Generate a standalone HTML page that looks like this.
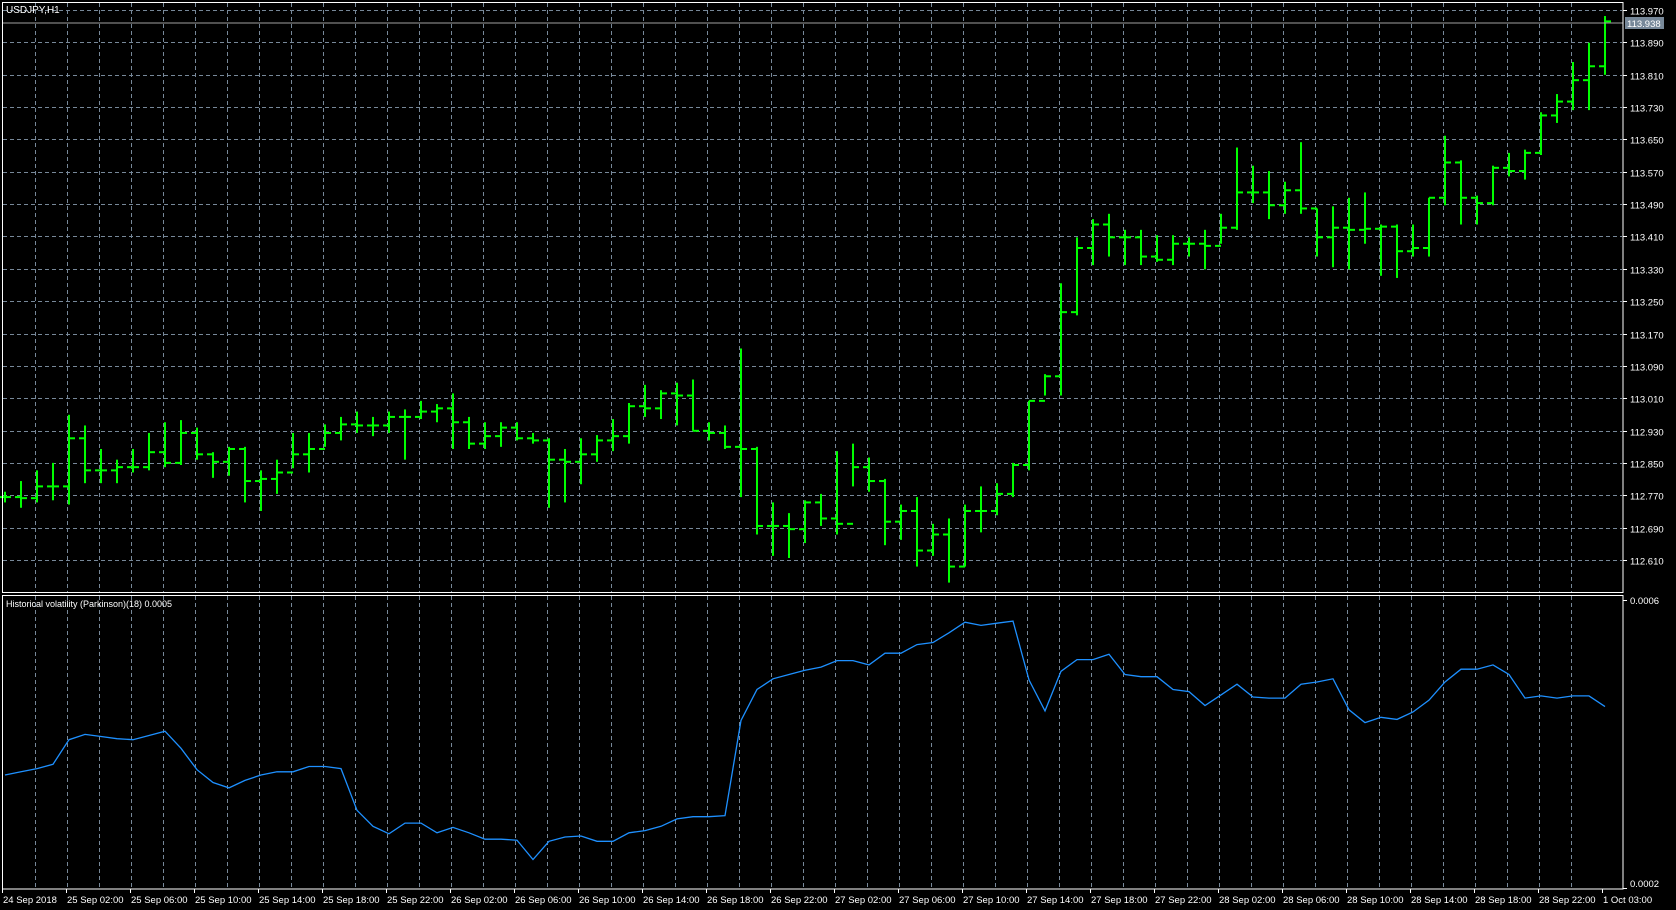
<!DOCTYPE html>
<html><head><meta charset="utf-8"><style>
html,body{margin:0;padding:0;background:#000;width:1676px;height:910px;overflow:hidden}
svg{display:block}
text{font-family:"Liberation Sans",sans-serif;font-size:10px;fill:#fff}
</style></head><body>
<svg id="s" width="1676" height="910" xmlns="http://www.w3.org/2000/svg">
<rect width="1676" height="910" fill="#000"/>
<g id="grid"></g>
<g id="bars"></g>
<polyline id="ind" fill="none" stroke="#1e90ff" stroke-width="1.3"/>
<line x1="2" y1="23" x2="1623" y2="23" stroke="#a0a0a0" stroke-width="1"/>
<rect x="2.5" y="2.5" width="1620.5" height="590" fill="none" stroke="#fff" stroke-width="1"/>
<rect x="2.5" y="595.5" width="1620.5" height="293.5" fill="none" stroke="#fff" stroke-width="1"/>
<text x="6" y="13">USDJPY,H1</text>
<text x="6" y="607" style="font-size:9px">Historical volatility (Parkinson)(18) 0.0005</text>
<rect x="1625" y="17" width="39" height="12" fill="#778899"/>
<text x="1627" y="27" style="font-size:9.5px">113.938</text>
<g id="axis"></g>
</svg>
<script>
var NS="http://www.w3.org/2000/svg";
function el(p,t,a,txt){var e=document.createElementNS(NS,t);for(var k in a)e.setAttribute(k,a[k]);if(txt!==undefined)e.textContent=txt;p.appendChild(e);return e;}
var g=document.getElementById('grid'),ax=document.getElementById('axis'),b=document.getElementById('bars');
for(var x=35;x<=1602;x+=32){el(g,'line',{x1:x+.5,y1:3,x2:x+.5,y2:592,stroke:'#778899','stroke-dasharray':'4,3'});el(g,'line',{x1:x+.5,y1:596,x2:x+.5,y2:888,stroke:'#778899','stroke-dasharray':'4,3'});}
for(var k=0;k<18;k++){var y=Math.round(10+32.35*k)+.5;el(g,'line',{x1:3,y1:y,x2:1622,y2:y,stroke:'#778899','stroke-dasharray':'4,3'});
el(ax,'line',{x1:1623,y1:y,x2:1627,y2:y,stroke:'#fff'});el(ax,'text',{x:1630,y:y+4,style:'font-size:9.5px'},(113.970-0.08*k).toFixed(3));}
el(ax,'text',{x:1630,y:604,style:'font-size:9.5px'},'0.0006');
el(ax,'text',{x:1630,y:887,style:'font-size:9.5px'},'0.0002');
el(ax,'line',{x1:1623,y1:600.5,x2:1627,y2:600.5,stroke:'#fff'});
el(ax,'line',{x1:1623,y1:888.5,x2:1627,y2:888.5,stroke:'#fff'});
var labs=['24 Sep 2018'],hrs=['02:00','06:00','10:00','14:00','18:00','22:00'];
[25,26,27,28].forEach(function(d){hrs.forEach(function(h){labs.push(d+' Sep '+h);});});labs.push('1 Oct 03:00');
labs.forEach(function(t,i){var x=2+64*i;el(ax,'line',{x1:x+.5,y1:889,x2:x+.5,y2:893,stroke:'#fff'});el(ax,'text',{x:x+1,y:903,style:'font-size:9.5px'},t);});
var B=[[460,470,465],[450,475,466],[440,470,455],[433,468,455],[388,472,410],[398,452,440],[420,452,440],[430,452,437],[420,442,437],[405,440,423],[395,437,433],[393,435,405],[400,430,425],[423,447,432],[418,445,420],[418,470,450],[440,478,448],[430,462,442],[405,438,425],[405,442,420],[397,418,405],[390,412,397],[385,405,398],[390,408,398],[385,405,390],[383,430,390],[375,392,385],[378,395,382],[368,420,395],[390,420,415],[395,420,408],[395,418,400],[395,412,410],[405,415,412],[410,475,430],[420,470,432],[410,453,425],[407,432,412],[392,422,408],[377,415,380],[360,390,382],[365,392,368],[358,398,370],[355,403,403],[395,412,405],[398,420,418],[326,465,420],[418,500,492],[470,520,492],[480,522,495],[468,508,470],[462,492,485],[422,500,490],[415,455,437],[428,460,450],[448,510,488],[472,505,478],[465,530,515],[490,520,500],[485,545,530],[472,530,478],[455,498,478],[452,482,462],[433,465,435],[375,440,375],[350,370,352],[265,370,292],[222,295,232],[205,248,210],[200,240,222],[215,248,222],[215,248,240],[220,245,243],[220,248,228],[222,240,228],[215,252,230],[200,228,213],[138,215,180],[155,190,180],[160,205,192],[170,200,178],[133,200,195],[195,240,222],[193,250,213],[185,252,215],[180,228,214],[210,258,212],[210,260,235],[210,240,232],[185,240,185],[127,192,152],[150,210,185],[183,210,190],[155,192,157],[143,165,160],[140,168,143],[105,145,108],[88,115,95],[58,103,75],[40,103,62],[15,70,20]];
var S=1.069,prev=B[0][2];
B.forEach(function(r,i){var x=5+16*i;var h=r[0]*S,l=r[1]*S,c=r[2]*S,o=prev*S;prev=r[2];
el(b,'line',{x1:x,y1:h,x2:x,y2:l,stroke:'#00ff00','stroke-width':2});
el(b,'line',{x1:x-6,y1:o,x2:x,y2:o,stroke:'#00ff00','stroke-width':2});
el(b,'line',{x1:x,y1:c,x2:x+6,y2:c,stroke:'#00ff00','stroke-width':2});});
var I=[725,722,719,715,692,687,689,691,692,688,684,700,720,732,737,730,725,722,722,717,717,719,758,773,780,770,770,779,774,779,785,785,786,804,787,783,782,787,787,779,777,773,766,764,764,763,674,645,635,631,627,624,618,618,622,611,611,603,601,592,582,585,583,581,636,665,628,617,617,612,631,633,633,645,647,660,650,640,652,653,653,640,638,635,664,676,671,673,666,655,638,626,626,622,631,653,651,653,651,651,661];
document.getElementById('ind').setAttribute('points',I.map(function(v,i){return (5+16*i)+','+(v*S).toFixed(1);}).join(' '));
</script>
</body></html>
